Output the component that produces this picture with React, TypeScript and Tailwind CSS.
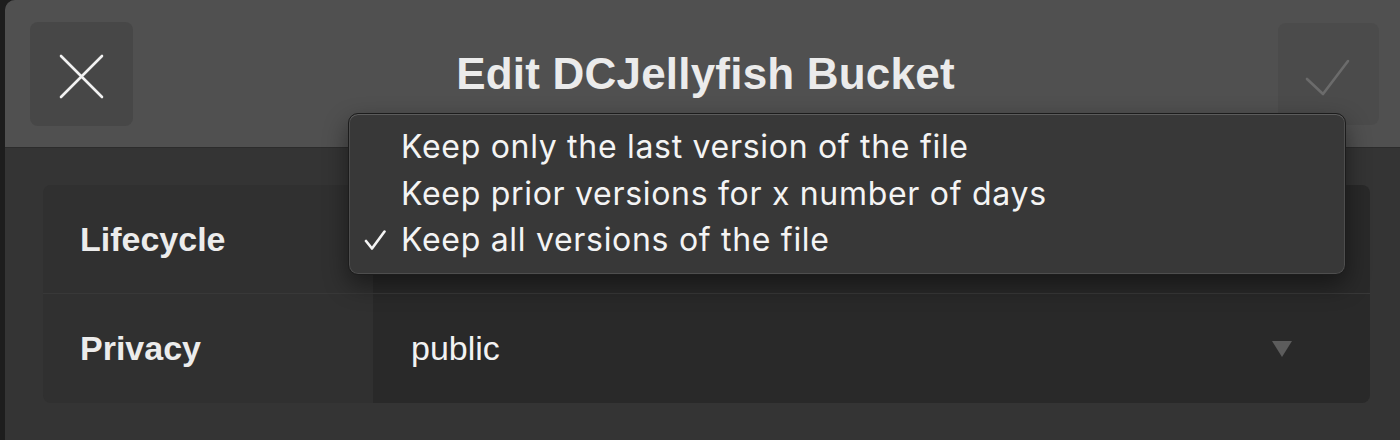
// dark macOS-ish sheet colours
const HEADER_BG = "bg-[#505050]";

const options = [
  { label: "Keep only the last version of the file", selected: false },
  { label: "Keep prior versions for x number of days", selected: false },
  { label: "Keep all versions of the file", selected: true },
];

function FieldRow({ label, children, last = false }: { label: string; children?: React.ReactNode; last?: boolean }) {
  return (
    <div className={`flex h-[109px] ${last ? "" : "border-b border-[#383838]"}`}>
      <div className="flex w-[330px] shrink-0 items-center bg-[#303030] pl-[37px] text-[34px] font-bold text-[#ececec]">
        {label}
      </div>
      <div className="flex flex-1 items-center bg-[#292929] pl-[38px] pr-[78px] text-[34px] text-[#f2f2f2]">
        {children}
      </div>
    </div>
  );
}

export default function App() {
  return (
    <div
      className="h-[440px] w-[1400px] overflow-hidden bg-[#1d1d1d]"
      style={{ fontFamily: '"Liberation Sans", Arial, sans-serif' }}
    >
      <div className="relative ml-[5px] h-[440px] w-[1400px] overflow-hidden rounded-tl-[10px] bg-[#343434]">
        {/* header */}
        <div className={`flex h-[148px] items-center justify-between border-b border-[#2c2c2c] pl-[25px] pr-[26px] ${HEADER_BG}`}>
          <button className="flex h-[104px] w-[103px] items-center justify-center rounded-[8px] bg-[#474747]">
            <svg width="103" height="104" viewBox="0 0 103 104" fill="none">
              <path d="M31 34 L72 75 M72 34 L31 75" stroke="#f2f2f2" strokeWidth="2.6" strokeLinecap="round" />
            </svg>
          </button>
          <h1 className="text-[44px] font-bold tracking-[0.2px] text-[#ebebeb]">Edit DCJellyfish Bucket</h1>
          <button className="flex h-[102px] w-[101px] items-center justify-center rounded-[8px] bg-[#4b4b4b]">
            <svg width="101" height="102" viewBox="0 0 101 102" fill="none">
              <path d="M29 56 L45 71 L70 38" stroke="#6b6b6b" strokeWidth="2.6" strokeLinecap="round" strokeLinejoin="round" />
            </svg>
          </button>
        </div>

        {/* form card */}
        <div className="pl-[38px] pr-[35px] pt-[37px]">
          <div className="overflow-hidden rounded-[8px]">
            <FieldRow label="Lifecycle" />
            <FieldRow label="Privacy" last>
              <span className="flex-1">public</span>
              <svg width="20" height="16" viewBox="0 0 20 16" className="shrink-0">
                <path d="M0 0 H20 L10 16 Z" fill="#5c5c5c" />
              </svg>
            </FieldRow>
          </div>
        </div>

        {/* open lifecycle menu */}
        <div
          className="absolute left-[343px] top-[113px] w-[998px] rounded-[10px] border border-[#1c1c1c] bg-[#383838] py-[10px] pl-[15px] shadow-[inset_0_1px_0_#5c5c5c,inset_0_0_0_1px_#4e4e4e,0_10px_24px_rgba(0,0,0,0.45)]"
          style={{ fontFamily: 'Inter, "Open Sans", sans-serif' }}
        >
          {options.map((o) => (
            <div key={o.label} className="flex h-[46.5px] items-center text-[32px] tracking-[0.7px] text-[#f4f4f4]">
              <span className="flex w-[37px] shrink-0 items-center">
                {o.selected && (
                  <svg width="22" height="20" viewBox="0 0 22 20" fill="none">
                    <path d="M2 11 L8 18.5 L20.5 1.5" stroke="#f4f4f4" strokeWidth="2.6" strokeLinecap="round" strokeLinejoin="round" />
                  </svg>
                )}
              </span>
              <span>{o.label}</span>
            </div>
          ))}
        </div>
      </div>
    </div>
  );
}
